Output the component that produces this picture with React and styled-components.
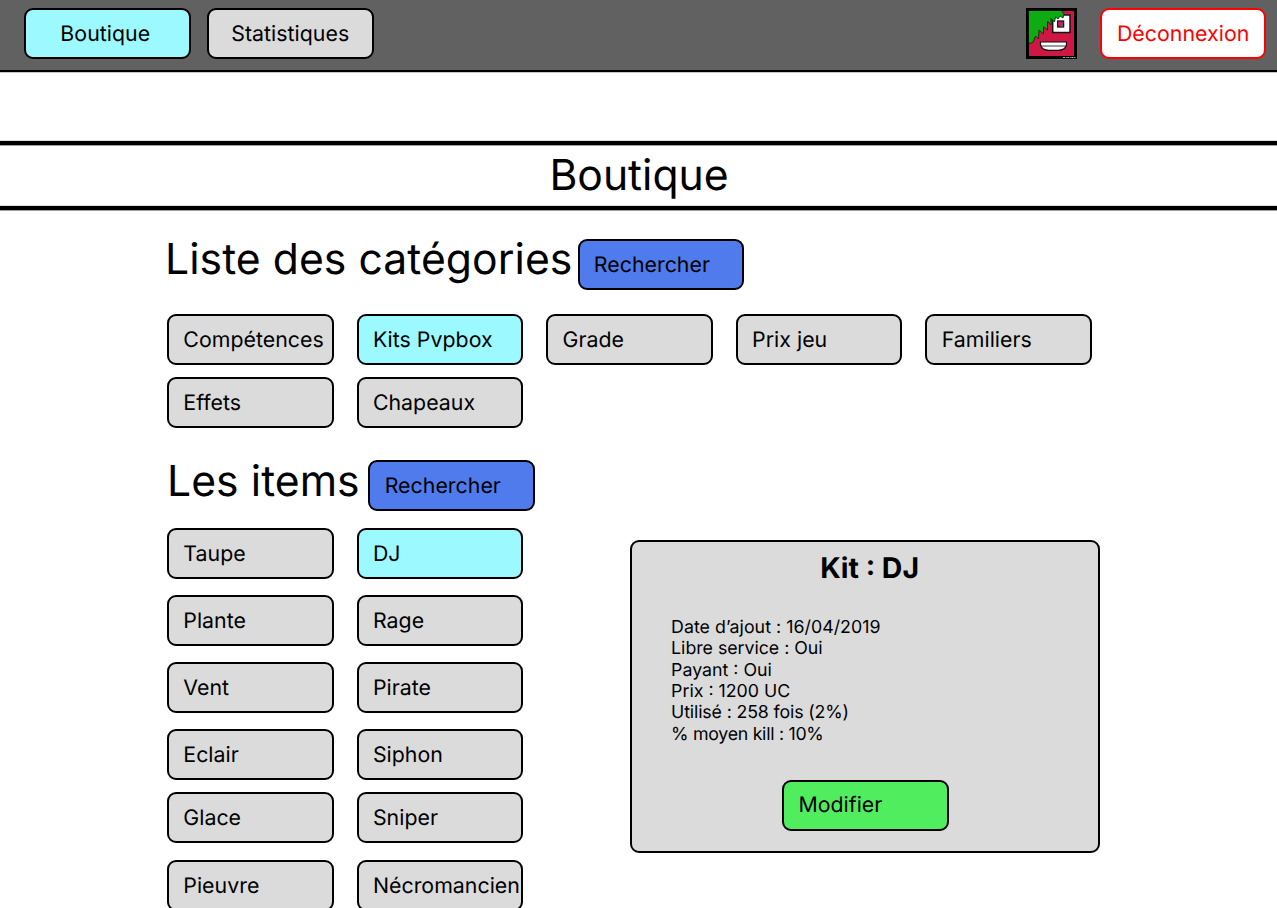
import React from "react";
import styled, { createGlobalStyle, css } from "styled-components";

const GlobalStyle = createGlobalStyle`
  *, *::before, *::after { box-sizing: border-box; }
  html, body { margin: 0; padding: 0; }
  body {
    height: 908px;
    overflow: hidden;
    background: #fff;
    color: #000;
    font-family: Inter, "Liberation Sans", sans-serif;
    text-rendering: geometricPrecision;
  }
  h1, h2, h3, p { margin: 0; font-weight: 400; }
`;

const tones = {
  grey: "#dbdbdb",
  cyan: "#9bf9ff",
  blue: "#4f7bec",
  green: "#50ee5e",
};

const Page = styled.div`
  width: 1277px;
  height: 908px;
  overflow: hidden;
`;

const Button = styled.button`
  flex: none;
  display: flex;
  align-items: center;
  width: 166.5px;
  height: 51px;
  padding: 0 0 0 14.3px;
  border: 2px solid #000;
  border-radius: 9px;
  background: ${(p) => tones[p.$tone || "grey"]};
  color: #000;
  font: 400 21.33px/26px Inter, "Liberation Sans", sans-serif;
  letter-spacing: 0.02px;
  text-rendering: geometricPrecision;
  white-space: nowrap;
  cursor: pointer;
  ${(p) =>
    p.$centered &&
    css`
      justify-content: center;
      padding: 0;
    `}
`;

const NavButton = styled(Button)`
  padding-right: ${(p) => p.$shift || 0}px;
`;

const LogoutButton = styled(Button)`
  border-color: #f00;
  background: #fff;
  color: #f00;
`;

const TopBar = styled.header`
  display: flex;
  align-items: flex-start;
  height: 72px;
  padding: 8px 10.6px 0 24px;
  border-bottom: 2px solid #000;
  box-shadow: 0 1px #c4c4c4;
  background: #616161;
`;

const Nav = styled.nav`
  display: flex;
  gap: 16.5px;
  margin-right: auto;
`;

const Account = styled.div`
  display: flex;
  gap: 23px;
`;

const AvatarArt = styled.svg`
  display: block;
  width: 51px;
  height: 51px;
`;

const TitleBand = styled.div`
  display: flex;
  justify-content: center;
  height: 69px;
  margin-top: 69px;
  padding: 5px 0 0 1px;
  border: solid #000;
  border-width: 4px 0;
  box-shadow: 0 -1px #dedede, 0 1px #a0a0a0, inset 0 1px #a0a0a0, inset 0 -1px #dedede;
`;

const PageTitle = styled.h1`
  font-size: 42.66px;
  line-height: 52px;
`;

const SectionHead = styled.div`
  display: flex;
  align-items: flex-start;
  height: 55px;
  padding-left: ${(p) => p.$indent}px;
`;

const SectionTitle = styled.h2`
  width: ${(p) => p.$width}px;
  padding-top: 1px;
  font-size: 42.66px;
  line-height: 52px;
  letter-spacing: 0.06px;
  white-space: nowrap;
`;

const HeadAction = styled.div`
  padding-top: ${(p) => p.$drop}px;
`;

const Content = styled.main`
  padding: 23px 0 0 165px;
`;

const CategoryGrid = styled.div`
  display: grid;
  grid-template-columns: repeat(5, 166.5px);
  gap: 12px 23.1px;
  margin: 26px 0 27px 2px;
`;

const ItemsArea = styled.div`
  display: flex;
  align-items: flex-start;
  gap: 107px;
  margin: 18px 0 0 2px;
`;

const ItemGrid = styled.div`
  display: grid;
  grid-template-columns: repeat(2, 166.5px);
  grid-template-rows: 67px 67px 67px 63px 68px 51px;
  column-gap: 23.1px;
`;

const KitCard = styled.section`
  width: 470px;
  height: 313px;
  margin-top: 12px;
  padding: 8px 0 0 39px;
  border: 2px solid #000;
  border-radius: 9px;
  background: #dbdbdb;
`;

const KitTitle = styled.h3`
  padding-right: 30px;
  font-size: 28.44px;
  line-height: 35px;
  font-weight: 700;
  text-align: center;
`;

const KitDetails = styled.div`
  margin-top: 32px;
  font-size: 17.77px;
  line-height: 21.33px;
`;

const Detail = styled.p`
  letter-spacing: ${(p) => p.$tracking}px;
`;

const KitAction = styled.div`
  display: flex;
  margin: 35px 0 0 111px;
`;

function Avatar() {
  return (
    <AvatarArt viewBox="0 0 51 51" role="img" aria-label="Avatar">
      <rect width="51" height="51" fill="#000" />
      <rect x="3" y="3" width="45" height="45" fill="#cf1743" />
      <rect x="26.7" y="7" width="17.3" height="17.5" fill="#fff" stroke="#151515" strokeWidth="1.5" />
      <rect x="31.6" y="13" width="6" height="6" fill="#d51b49" stroke="#171332" strokeWidth="1.3" />
      <path d="M35 16h2v2.4h-2z" fill="#367078" />
      <path
        d="M3 3H36L38 6L37 10L34 8L32 11L29.5 9L28.5 14L25 10.5L25 17L21.5 13L21.5 22L17.5 18.5L17.5 26L13 22L12.5 31L9.5 28L7 34L3 36Z"
        fill="#0eac12"
        stroke="#102d10"
        strokeWidth="0.9"
      />
      <path d="M3 3H35V5H4V34H3Z" fill="#0eac12" />
      <path d="M14.5 34H40.5V37Q39 42.3 32 42.3H23Q16 42.3 14.5 37Z" fill="#fff" stroke="#111" strokeWidth="1.2" />
      <path d="M15 38H40" fill="none" stroke="#222" strokeWidth="0.9" />
      <path d="M37 49.5H50" stroke="#aaa" strokeWidth="1" strokeDasharray="2 .7 1 .5" />
    </AvatarArt>
  );
}

const categories = ["Compétences", "Kits Pvpbox", "Grade", "Prix jeu", "Familiers", "Effets", "Chapeaux"];

const items = [
  "Taupe", "DJ", "Plante", "Rage", "Vent", "Pirate",
  "Eclair", "Siphon", "Glace", "Sniper", "Pieuvre", "Nécromancien",
];

const details = [
  { text: "Date d’ajout : 16/04/2019", tracking: 0.03 },
  { text: "Libre service : Oui", tracking: -0.03 },
  { text: "Payant : Oui", tracking: 0 },
  { text: "Prix : 1200 UC", tracking: 0 },
  { text: "Utilisé : 258 fois (2%)", tracking: -0.14 },
  { text: "% moyen kill : 10%", tracking: -0.28 },
];

export default function App() {
  return (
    <Page>
      <GlobalStyle />
      <TopBar>
        <Nav>
          <NavButton $tone="cyan" $centered $shift={4}>Boutique</NavButton>
          <NavButton $centered>Statistiques</NavButton>
        </Nav>
        <Account>
          <Avatar />
          <LogoutButton $centered>Déconnexion</LogoutButton>
        </Account>
      </TopBar>
      <TitleBand>
        <PageTitle>Boutique</PageTitle>
      </TitleBand>
      <Content>
        <SectionHead $indent={0}>
          <SectionTitle $width={412.5}>Liste des catégories</SectionTitle>
          <HeadAction $drop={6}><Button $tone="blue">Rechercher</Button></HeadAction>
        </SectionHead>
        <CategoryGrid>
          {categories.map((name) => (
            <Button key={name} $tone={name === "Kits Pvpbox" ? "cyan" : "grey"}>{name}</Button>
          ))}
        </CategoryGrid>
        <SectionHead $indent={2}>
          <SectionTitle $width={201.4}>Les items</SectionTitle>
          <HeadAction $drop={5}><Button $tone="blue">Rechercher</Button></HeadAction>
        </SectionHead>
        <ItemsArea>
          <ItemGrid>
            {items.map((name) => (
              <Button key={name} $tone={name === "DJ" ? "cyan" : "grey"}>{name}</Button>
            ))}
          </ItemGrid>
          <KitCard>
            <KitTitle>Kit : DJ</KitTitle>
            <KitDetails>
              {details.map(({ text, tracking }) => (
                <Detail key={text} $tracking={tracking}>{text}</Detail>
              ))}
            </KitDetails>
            <KitAction><Button $tone="green">Modifier</Button></KitAction>
          </KitCard>
        </ItemsArea>
      </Content>
    </Page>
  );
}
